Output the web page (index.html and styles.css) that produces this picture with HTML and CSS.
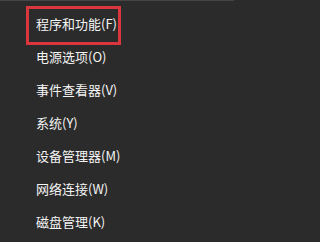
FILE: index.html
```html
<!DOCTYPE html>
<html lang="zh-CN">
<head>
<meta charset="utf-8">
<link rel="stylesheet" href="styles.css">
</head>
<body>
<ul class="menu">
  <li class="item marked"><span class="label">程序和功能(F)</span><span class="mark"></span></li>
  <li class="item"><span class="label">电源选项(O)</span></li>
  <li class="item"><span class="label">事件查看器(V)</span></li>
  <li class="item"><span class="label">系统(Y)</span></li>
  <li class="item"><span class="label">设备管理器(M)</span></li>
  <li class="item"><span class="label">网络连接(W)</span></li>
  <li class="item"><span class="label">磁盘管理(K)</span></li>
</ul>
</body>
</html>
```
FILE: styles.css
```css
html, body {
  margin: 0;
  padding: 0;
  background: #2b2b2b;
}
body {
  width: 234px;
  height: 242px;
  overflow: hidden;
  font-family: "Noto Sans CJK SC", "Microsoft YaHei", sans-serif;
  font-size: 13px;
  color: #f4f4f4;
}
.menu {
  list-style: none;
  margin: 0;
  padding: 6px 0 0 0;
  border-top: 1px solid #454545;
}
.item {
  height: 33px;
  line-height: 33px;
  padding-left: 36px;
  white-space: nowrap;
}
.marked {
  position: relative;
}
.mark {
  position: absolute;
  left: 26px;
  top: -1px;
  width: 95px;
  height: 39px;
  box-sizing: border-box;
  border: 3px solid #d9363d;
}
```
